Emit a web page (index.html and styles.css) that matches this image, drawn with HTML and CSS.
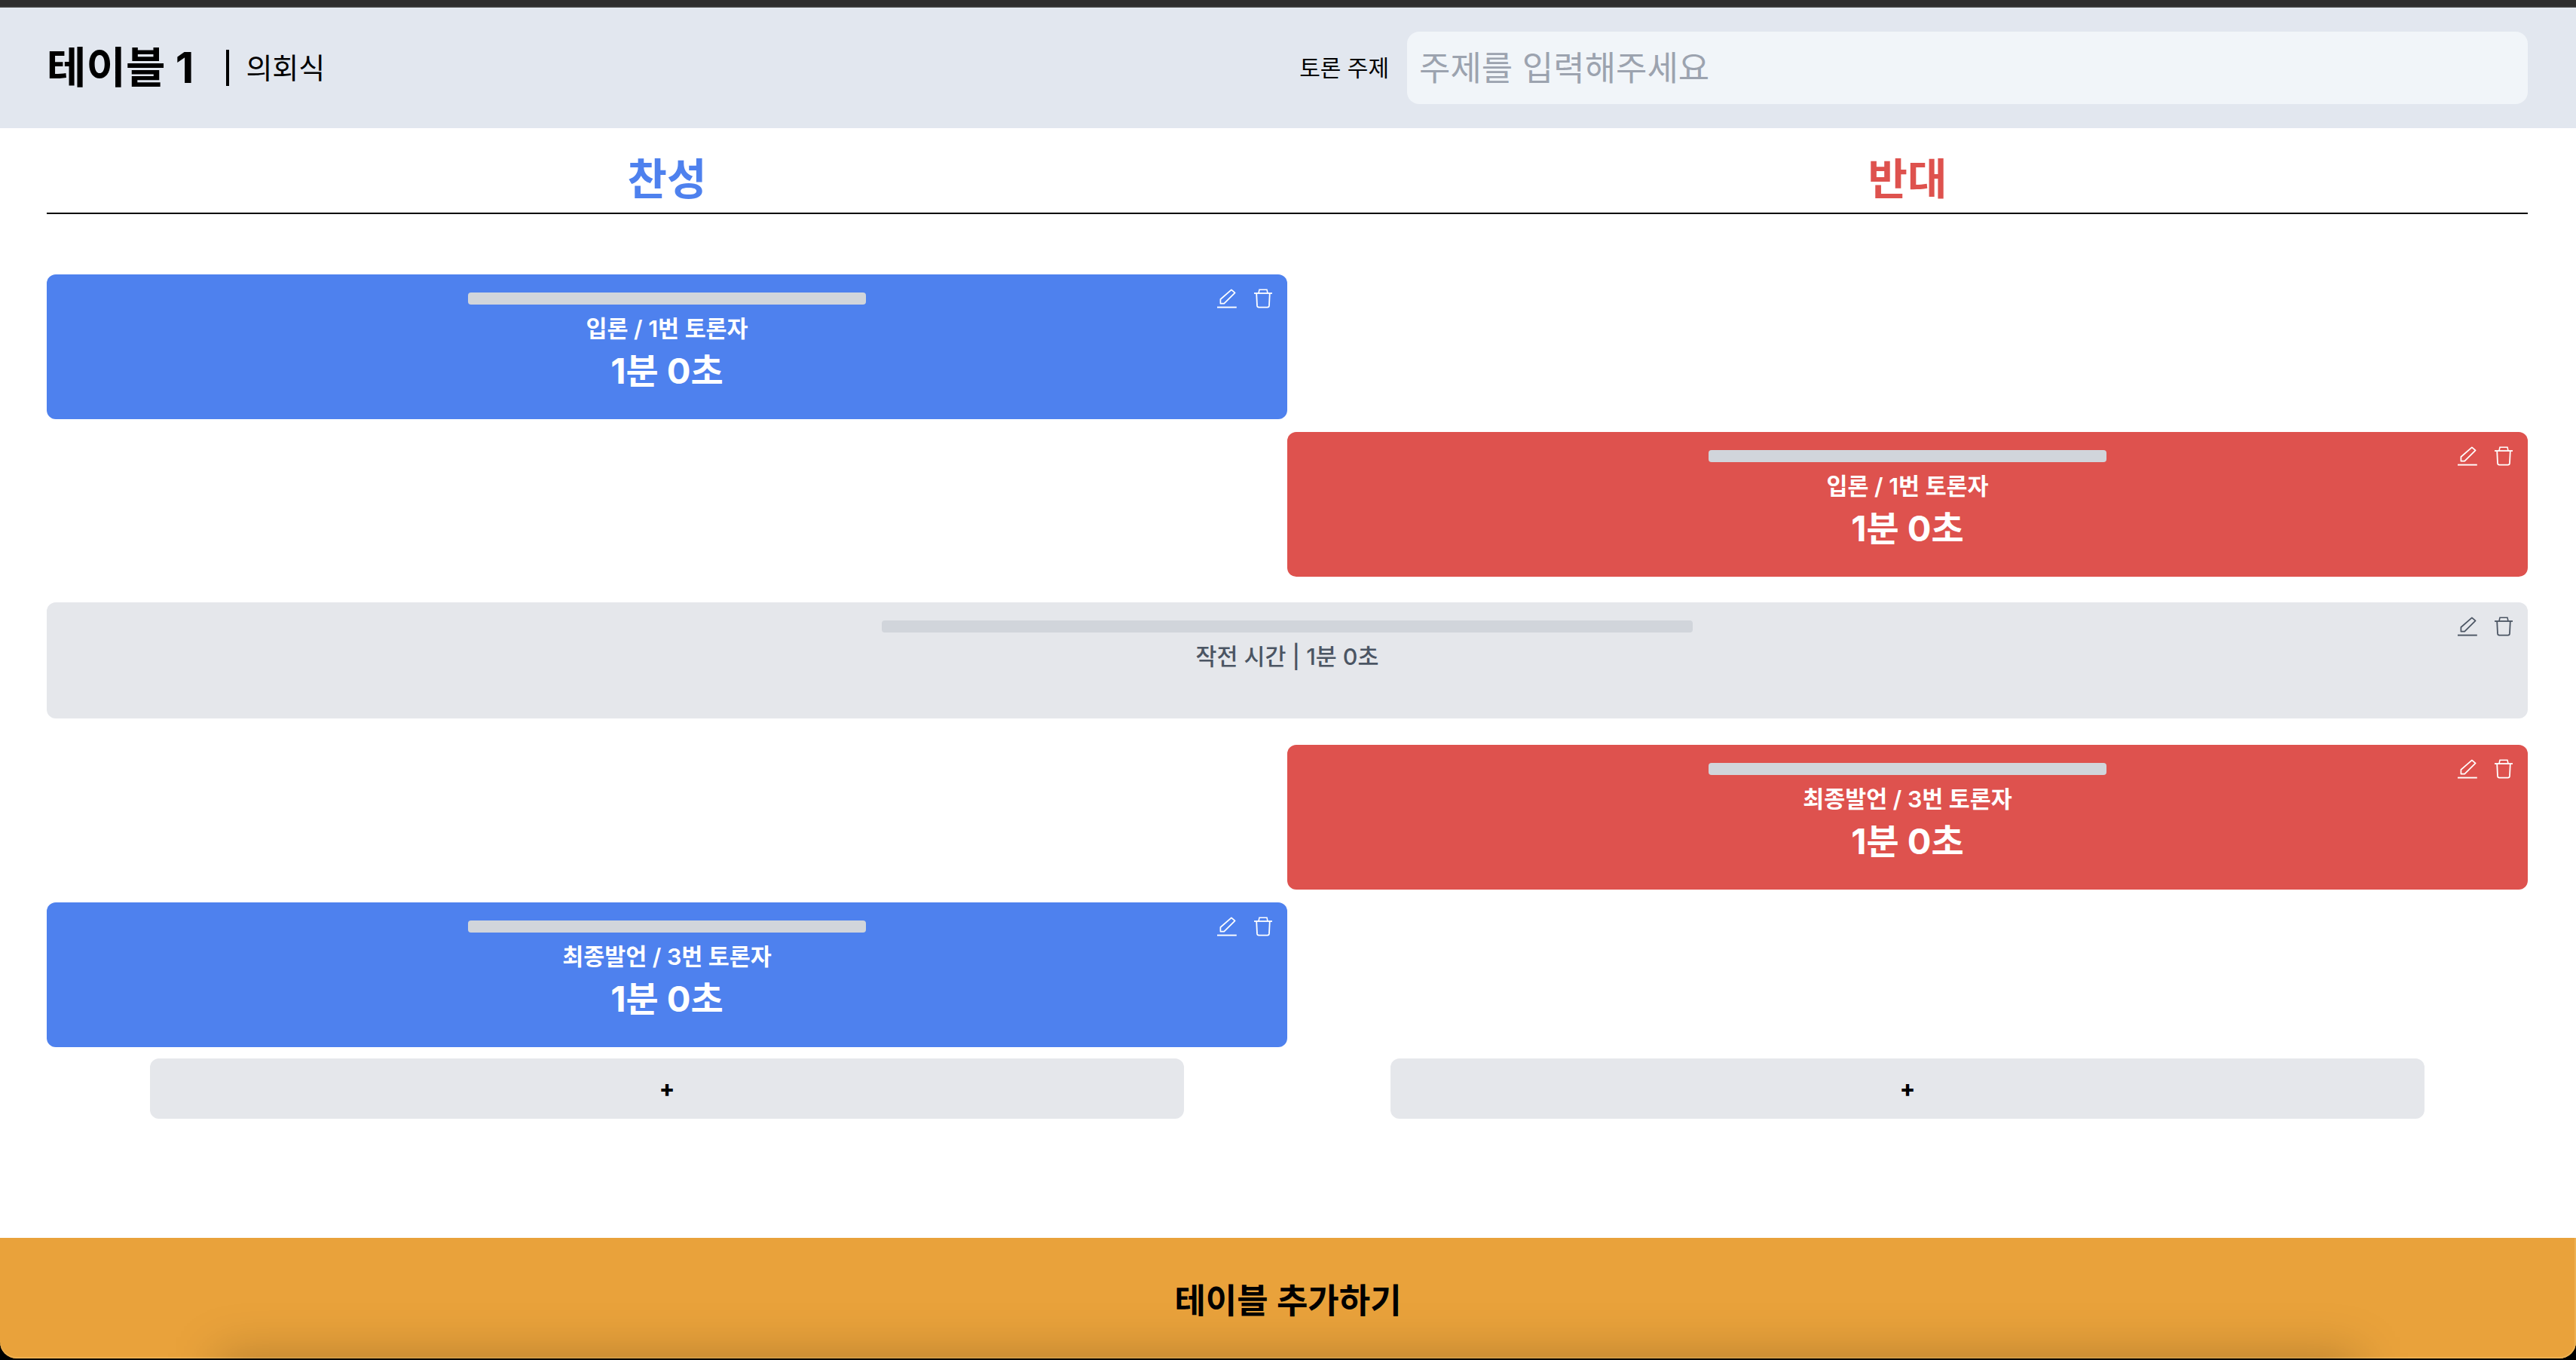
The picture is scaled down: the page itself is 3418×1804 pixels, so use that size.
FILE: index.html
```html
<!DOCTYPE html>
<html lang="ko">
<head>
<meta charset="utf-8">
<title>테이블 1</title>
<link rel="stylesheet" href="styles.css">
</head>
<body>
<svg class="defs" width="0" height="0" aria-hidden="true">
  <symbol id="i-edit" viewBox="0 0 28 26">
    <path d="M5.4 19.6V14L19.9 1.3 24.6 5.4 10.2 19.6Z" fill="none" stroke="currentColor" stroke-width="1.7" stroke-linejoin="round"/>
    <path d="M1 24.6H26.8" fill="none" stroke="currentColor" stroke-width="1.9"/>
  </symbol>
  <symbol id="i-trash" viewBox="0 0 24 26">
    <path d="M0 6H24" fill="none" stroke="currentColor" stroke-width="1.8"/>
    <path d="M6 6 7 1.2H17L18 6" fill="none" stroke="currentColor" stroke-width="1.6"/>
    <path d="M3.2 6 4 22.4Q4.2 24.6 6.2 24.6H17.8Q19.8 24.6 20 22.4L20.8 6" fill="none" stroke="currentColor" stroke-width="1.8"/>
  </symbol>
</svg>
<div class="topbar"></div>
<header class="header">
  <div class="title-group">
    <h1 class="title">테이블 1</h1>
    <span class="format">의회식</span>
  </div>
  <div class="topic">
    <label class="topic-label" for="topic">토론 주제</label>
    <input class="topic-input" id="topic" type="text" placeholder="주제를 입력해주세요">
  </div>
</header>
<main class="main">
  <div class="sides">
    <h2 class="side side-pro">찬성</h2>
    <h2 class="side side-con">반대</h2>
  </div>
  <div class="timeline">
    <article class="card card-pro">
      <div class="grip"></div>
      <p class="card-label">입론 / 1번 토론자</p>
      <p class="card-time">1분 0초</p>
      <div class="card-actions">
        <svg class="icon-edit"><use href="#i-edit"/></svg>
        <svg class="icon-trash"><use href="#i-trash"/></svg>
      </div>
    </article>
    <article class="card card-con">
      <div class="grip"></div>
      <p class="card-label">입론 / 1번 토론자</p>
      <p class="card-time">1분 0초</p>
      <div class="card-actions">
        <svg class="icon-edit"><use href="#i-edit"/></svg>
        <svg class="icon-trash"><use href="#i-trash"/></svg>
      </div>
    </article>
    <article class="card card-neutral">
      <div class="grip"></div>
      <p class="neutral-label">작전 시간 | 1분 0초</p>
      <div class="card-actions">
        <svg class="icon-edit"><use href="#i-edit"/></svg>
        <svg class="icon-trash"><use href="#i-trash"/></svg>
      </div>
    </article>
    <article class="card card-con">
      <div class="grip"></div>
      <p class="card-label">최종발언 / 3번 토론자</p>
      <p class="card-time">1분 0초</p>
      <div class="card-actions">
        <svg class="icon-edit"><use href="#i-edit"/></svg>
        <svg class="icon-trash"><use href="#i-trash"/></svg>
      </div>
    </article>
    <article class="card card-pro">
      <div class="grip"></div>
      <p class="card-label">최종발언 / 3번 토론자</p>
      <p class="card-time">1분 0초</p>
      <div class="card-actions">
        <svg class="icon-edit"><use href="#i-edit"/></svg>
        <svg class="icon-trash"><use href="#i-trash"/></svg>
      </div>
    </article>
  </div>
  <div class="adds">
    <button class="add" type="button">+</button>
    <button class="add" type="button">+</button>
  </div>
</main>
<footer class="footer">
  <span class="footer-shadow"></span>
  <button class="footer-btn" type="button">테이블 추가하기</button>
</footer>
</body>
</html>
```
FILE: styles.css
```css
* { box-sizing: border-box; }
html, body { margin: 0; padding: 0; }
body {
  width: 3418px;
  height: 1804px;
  overflow: hidden;
  display: flex;
  flex-direction: column;
  background: #000;
  font-family: Inter, "Noto Sans CJK KR", "Noto Sans", sans-serif;
  color: #000;
}
.defs { position: absolute; }
.topbar {
  height: 10px;
  flex: none;
  background: #2e2e2e;
  border-bottom: 2px solid #3a3a3a;
}
.header {
  height: 160px;
  flex: none;
  background: #e2e7ef;
  display: flex;
  align-items: center;
  justify-content: space-between;
  padding: 0 64px 0 62px;
}
.title-group { display: flex; align-items: center; }
.title {
  margin: 0;
  font-size: 57px;
  font-weight: 700;
  line-height: 64px;
}
.format {
  margin-left: 43px;
  padding-left: 22px;
  border-left: 4px solid #000;
  font-size: 38px;
  line-height: 48px;
}
.topic { display: flex; align-items: center; gap: 24px; }
.topic-label { font-size: 30px; line-height: 40px; }
.topic-input {
  width: 1487px;
  height: 96px;
  border: 0;
  outline: 0;
  border-radius: 16px;
  background: #f1f5f9;
  padding: 0 16px;
  font: inherit;
  font-size: 45px;
}
.topic-input::placeholder { color: #9ca3af; opacity: 1; }
.main {
  flex: 1;
  background: #fff;
  padding: 0 64px 0 62px;
}
.sides {
  display: grid;
  grid-template-columns: 1fr 1fr;
  height: 114px;
  border-bottom: 2px solid #000;
}
.side {
  margin: 0;
  text-align: center;
  font-size: 57px;
  font-weight: 700;
  line-height: 78px;
  padding-top: 29px;
}
.side-pro { color: #4e81ee; }
.side-con { color: #de524e; }
.timeline {
  display: flex;
  flex-direction: column;
  gap: 17px;
  padding-top: 80px;
}
.card {
  position: relative;
  width: 50%;
  height: 192px;
  border-radius: 12px;
  padding: 24px 32px 0;
  display: flex;
  flex-direction: column;
  align-items: center;
  color: #fff;
}
.card-pro { background: #4e81ee; }
.card-con { background: #de524e; margin-left: 50%; }
.card-neutral {
  width: 100%;
  height: 154px;
  margin: 17px 0 18px;
  background: #e5e7eb;
  color: #4b5563;
}
.grip {
  width: 33.333%;
  height: 16px;
  border-radius: 4px;
  background: #d1d5db;
  flex: none;
}
.card-label {
  margin: 12px 0 0;
  font-size: 30.4px;
  font-weight: 600;
  line-height: 40px;
}
.neutral-label {
  margin: 12px 0 0;
  font-size: 30.4px;
  font-weight: 500;
  line-height: 40px;
}
.card-time {
  margin: 8px 0 0;
  font-size: 47px;
  font-weight: 700;
  line-height: 56px;
}
.card-actions {
  position: absolute;
  top: 19px;
  right: 20px;
  display: flex;
  gap: 22px;
}
.icon-edit { width: 28px; height: 26px; display: block; }
.icon-trash { width: 24px; height: 26px; display: block; }
.adds {
  display: grid;
  grid-template-columns: 1fr 1fr;
  padding-top: 15px;
}
.add {
  justify-self: center;
  width: 83.333%;
  height: 80px;
  border: 0;
  border-radius: 12px;
  background: #e5e7eb;
  color: #000;
  font: inherit;
  font-size: 30px;
  font-weight: 800;
}
.footer {
  position: relative;
  height: 160px;
  flex: none;
  background: #e9a23b;
  border-radius: 0 0 22px 22px;
  overflow: hidden;
  margin-bottom: 2px;
  box-shadow: inset 0 -2px 0 #eeb050, inset -2px 0 0 #eeb050;
}
.footer-shadow {
  position: absolute;
  left: 290px;
  right: 290px;
  bottom: -100px;
  height: 107px;
  background: rgba(0, 0, 0, .2);
  filter: blur(32px);
}
.footer-btn {
  position: relative;
  width: 100%;
  height: 100%;
  border: 0;
  background: none;
  color: #000;
  font: inherit;
  font-size: 45px;
  font-weight: 600;
}
```
